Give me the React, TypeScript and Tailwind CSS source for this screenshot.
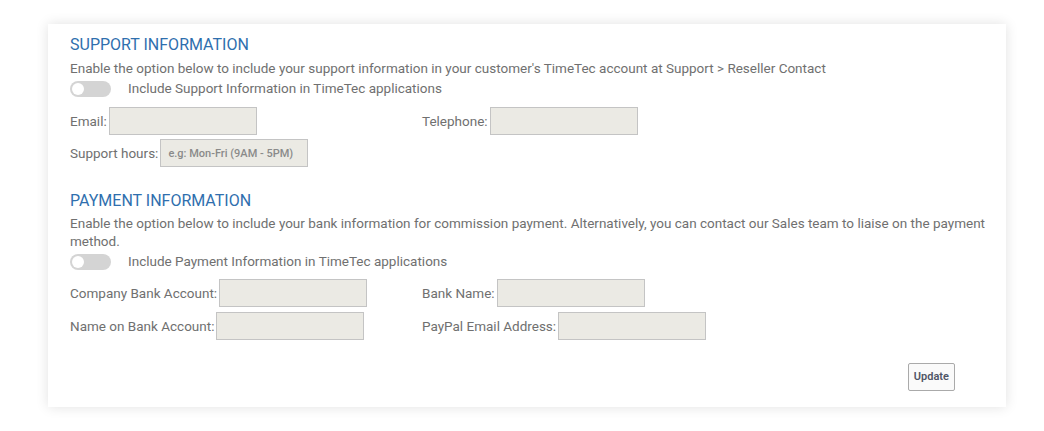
import React from "react";

const font = { fontFamily: "Roboto, 'Liberation Sans', sans-serif" };

const Toggle: React.FC<{ label: string }> = ({ label }) => (
  <div className="flex items-center h-[21px] mt-[1px]">
    <div className="w-[41px] h-[16px] rounded-full bg-[#d4d4d4] flex items-center px-[2px]">
      <div className="w-[12px] h-[12px] rounded-full bg-white" />
    </div>
    <span className="ml-[17px]">{label}</span>
  </div>
);

const Field: React.FC<{ label: string; placeholder?: string }> = ({ label, placeholder }) => (
  <div className="flex items-center">
    <span>{label}</span>
    <input
      readOnly
      placeholder={placeholder}
      className="ml-[2px] w-[148px] h-[28px] bg-[#ebeae4] border border-[#c4c4c4] px-[7px] text-[11px] font-medium placeholder:text-[#8a8a8a] outline-none"
      style={font}
    />
  </div>
);

const App: React.FC = () => {
  return (
    <div className="w-[1044px] h-[431px] bg-white pt-[24px] pl-[48px]" style={font}>
      <div className="w-[958px] h-[383px] bg-white shadow-[0_0_12px_rgba(0,0,0,0.12)] pl-[22px] pr-[20px] pt-[11px] text-[13.5px] text-[#707070]">
        <h2 className="text-[16px] leading-[20px] text-[#2f6fae] uppercase">Support Information</h2>
        <p className="mt-[4px] leading-[18px]">
          Enable the option below to include your support information in your customer's TimeTec account at Support &gt; Reseller Contact
        </p>
        <Toggle label="Include Support Information in TimeTec applications" />
        <div className="mt-[8px] grid grid-cols-[352px_1fr]">
          <Field label="Email:" />
          <Field label="Telephone:" />
        </div>
        <div className="mt-[4px]">
          <Field label="Support hours:" placeholder="e.g: Mon-Fri (9AM - 5PM)" />
        </div>

        <h2 className="mt-[24px] text-[16px] leading-[20px] text-[#2f6fae] uppercase">Payment Information</h2>
        <p className="mt-[3px] leading-[18px]">
          Enable the option below to include your bank information for commission payment. Alternatively, you can contact our Sales team to liaise on the payment method.
        </p>
        <Toggle label="Include Payment Information in TimeTec applications" />
        <div className="mt-[7px] grid grid-cols-[352px_1fr] gap-y-[5px]">
          <Field label="Company Bank Account:" />
          <Field label="Bank Name:" />
          <Field label="Name on Bank Account:" />
          <Field label="PayPal Email Address:" />
        </div>
        <div className="flex justify-end mt-[23px] pr-[31px]">
          <button className="h-[28px] px-[5px] text-[11px] font-semibold text-[#4f5566] bg-[#fafafa] border border-[#aaaaaa] rounded-[2px]">
            Update
          </button>
        </div>
      </div>
    </div>
  );
};

export default App;
